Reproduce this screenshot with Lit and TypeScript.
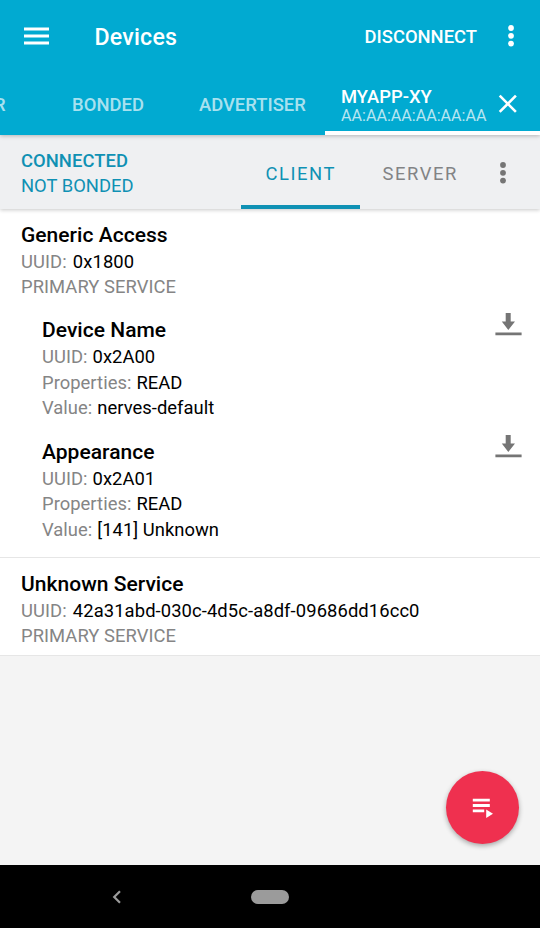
import { LitElement, html, css, svg } from "lit";
import { customElement, property } from "lit/decorators.js";

interface Field { label: string; value: string; }
interface Characteristic { name: string; fields: Field[]; }
interface Service { name: string; uuid: string; kind: string; characteristics: Characteristic[]; }

const SERVICES: Service[] = [
  {
    name: "Generic Access", uuid: "0x1800", kind: "PRIMARY SERVICE",
    characteristics: [
      { name: "Device Name", fields: [
        { label: "UUID:", value: "0x2A00" },
        { label: "Properties:", value: "READ" },
        { label: "Value:", value: "nerves-default" } ] },
      { name: "Appearance", fields: [
        { label: "UUID:", value: "0x2A01" },
        { label: "Properties:", value: "READ" },
        { label: "Value:", value: "[141] Unknown" } ] },
    ],
  },
  { name: "Unknown Service", uuid: "42a31abd-030c-4d5c-a8df-09686dd16cc0", kind: "PRIMARY SERVICE", characteristics: [] },
];

const dots = svg`<circle cx="4" cy="4" r="2.9"/><circle cx="4" cy="11.8" r="2.9"/><circle cx="4" cy="19.6" r="2.9"/>`;

@customElement("device-header")
class DeviceHeader extends LitElement {
  static styles = css`
    :host { display: block; height: 135px; background: #01aad1; color: #fff; position: relative; z-index: 2; box-shadow: 0 1px 4px rgba(0,0,0,.25); }
    .bar { display: flex; align-items: center; height: 72px; box-sizing: border-box; padding: 0 24px; }
    .menu { width: 25px; height: 19px; }
    .title { margin-left: 45.5px; font-size: 23.2px; font-weight: 500; line-height: 28px; padding-top: 1px; letter-spacing: .2px; }
    .action { margin-left: auto; font-size: 18.4px; font-weight: 500; line-height: 22px; padding-top: 1px; }
    .more { width: 8px; height: 24px; margin-left: 30px; margin-right: 1px; fill: #fff; }
    .tabs { display: flex; height: 63px; overflow: hidden; font-size: 18.4px; line-height: 22px; }
    .tab { font-weight: 500; color: rgba(255,255,255,.68); padding-top: 22px; flex: none; white-space: nowrap; }
    .cut { width: 72px; display: flex; }
    .cut span { margin-left: -6px; }
    .bonded { width: 127px; letter-spacing: .05px; }
    .adv { width: 126px; }
    .active { flex: 1; display: flex; box-sizing: border-box; border-bottom: 4px solid #fff; padding: 14px 0 0 16px; }
    .names { width: 157px; }
    .name { font-weight: 500; line-height: 22px; }
    .addr { font-size: 16.1px; line-height: 18px; margin-top: -1px; color: rgba(255,255,255,.72); white-space: nowrap; }
    .close { width: 20px; height: 20px; margin-top: 8px; flex: none; }
  `;
  render() {
    return html`
      <div class="bar">
        <svg class="menu" viewBox="0 0 25 19"><path d="M0 2h25M0 9h25M0 16h25" stroke="#fff" stroke-width="2.8"/></svg>
        <div class="title">Devices</div>
        <div class="action">DISCONNECT</div>
        <svg class="more" viewBox="0 0 8 24">${dots}</svg>
      </div>
      <div class="tabs">
        <div class="tab cut"><span>R</span></div>
        <div class="tab bonded">BONDED</div>
        <div class="tab adv">ADVERTISER</div>
        <div class="active">
          <div class="names"><div class="name">MYAPP-XY</div><div class="addr">AA:AA:AA:AA:AA:AA</div></div>
          <svg class="close" viewBox="0 0 20 20"><path d="M1.7 1.7l16.2 16.2M17.9 1.7l-16.2 16.2" stroke="#fff" stroke-width="2.6"/></svg>
        </div>
      </div>`;
  }
}

@customElement("connection-bar")
class ConnectionBar extends LitElement {
  static styles = css`
    :host { display: flex; height: 74px; background: #eff0f2; position: relative; z-index: 1; box-shadow: 0 1px 4px rgba(0,0,0,.22); }
    .state { width: 240.5px; box-sizing: border-box; padding: 12.6px 0 0 21px; color: #0f91b4; font-size: 18.4px; line-height: 25.4px; }
    .strong { font-weight: 500; letter-spacing: .05px; }
    .tab { width: 119.5px; box-sizing: border-box; padding: 27.5px 0 0 1px; text-align: center; font-size: 18.4px; line-height: 22px; letter-spacing: 1.55px; color: #828385; }
    .on { color: #0f91b4; border-bottom: 4px solid #0f91b4; }
    .more { width: 8px; height: 24px; margin: 25.5px 0 0 19.5px; fill: #757575; }
  `;
  render() {
    return html`
      <div class="state"><div class="strong">CONNECTED</div><div>NOT BONDED</div></div>
      <div class="tab on">CLIENT</div>
      <div class="tab">SERVER</div>
      <svg class="more" viewBox="0 0 8 24">${dots}</svg>`;
  }
}

@customElement("service-item")
class ServiceItem extends LitElement {
  @property({ attribute: false }) service!: Service;
  static styles = css`
    :host { display: block; background: #fff; box-sizing: border-box; padding: 12px 0 6.2px 21px; border-bottom: 1px solid #e6e6e6; font-size: 18.4px; line-height: 25.6px; color: #000; white-space: nowrap; letter-spacing: .09px; }
    .name { font-size: 21px; font-weight: 500; line-height: 26px; margin-bottom: .8px; letter-spacing: .03px; }
    .label { color: #858585; }
    .kind { letter-spacing: .05px; }
    .sp { margin-right: 6px; }
    .char { display: flex; justify-content: space-between; padding: 17.4px 18px 0 21px; letter-spacing: .03px; }
    .char + .char { padding-top: 18.1px; }
    .char:last-child { padding-bottom: 8.6px; }
    .gap { margin-right: 5px; }
    .dl { width: 27px; height: 24px; margin-top: -5px; fill: #757575; }
  `;
  render() {
    const s = this.service;
    return html`
      <div class="name">${s.name}</div>
      <div><span class="label sp">UUID:</span><span>${s.uuid}</span></div>
      <div class="label kind">${s.kind}</div>
      ${s.characteristics.map((c) => html`
        <div class="char">
          <div>
            <div class="name">${c.name}</div>
            ${c.fields.map((f) => html`<div><span class="label gap">${f.label}</span><span>${f.value}</span></div>`)}
          </div>
          <svg class="dl" viewBox="0 0 27 24"><path d="M10.7 1h5v8.5h4.3l-6.7 8.5-6.5-8.5h3.9zM.4 20.5h26.2v2.8H.4z"/></svg>
        </div>`)}`;
  }
}

@customElement("app-root")
class AppRoot extends LitElement {
  static styles = css`
    :host { display: flex; flex-direction: column; position: relative; height: 928px; overflow: hidden; background: #f4f4f4; font-family: Roboto, sans-serif; }
    .list { flex: 1; }
    .list service-item:first-child { border-top: 1px solid #fff; }
    .list service-item + service-item { padding-top: 12.6px; padding-bottom: 6.4px; }
    .fab { position: absolute; right: 21px; bottom: 84px; width: 73.5px; height: 73.5px; border-radius: 50%; background: #ef304f; box-shadow: 0 2px 5px rgba(0,0,0,.32); display: flex; align-items: center; justify-content: center; }
    .play { width: 22px; height: 22px; fill: #fff; }
    .nav { height: 63px; background: #000; display: flex; align-items: center; }
    .back { width: 10px; height: 14px; margin-left: 112px; }
    .home { width: 38px; height: 14px; border-radius: 7px; background: #9b9b9b; margin-left: 129px; }
  `;
  render() {
    return html`
      <device-header></device-header>
      <connection-bar></connection-bar>
      <div class="list">${SERVICES.map((s) => html`<service-item .service=${s}></service-item>`)}</div>
      <div class="fab"><svg class="play" viewBox="0 0 22 22"><path d="M1.8 2.8h17v2.8h-17zM1.8 8.1h17v2.8h-17zM1.8 13.4h11.4v2.8H1.8zM15.2 13.4l6.8 4.4-6.8 4.2z"/></svg></div>
      <div class="nav">
        <svg class="back" viewBox="0 0 10 14"><path d="M8 1.2L2.2 7 8 12.8" fill="none" stroke="#9b9b9b" stroke-width="2.2"/></svg>
        <div class="home"></div>
      </div>`;
  }
}
